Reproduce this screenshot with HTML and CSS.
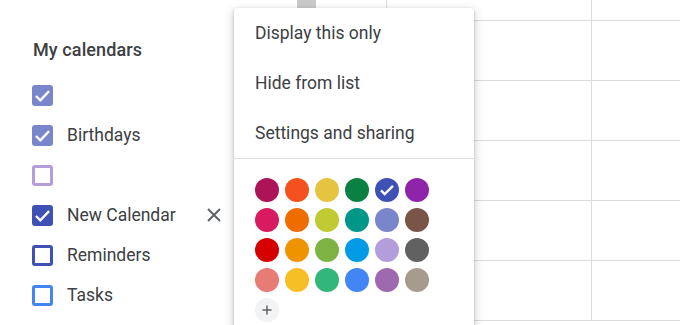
FILE: index.html
```html
<!DOCTYPE html>
<html>
<head>
<meta charset="utf-8">
<link rel="stylesheet" href="styles.css">
</head>
<body>
<div class="frame">
<div class="page">
  <aside class="sidebar">
    <h2 class="heading">My calendars</h2>
    <ul class="cal-list">
      <li class="cal"><span class="box checked c-lavender"><svg viewBox="0 0 24 24"><path d="M4.5 12.5l5 5L19.5 7" /></svg></span><span class="label"></span></li>
      <li class="cal"><span class="box checked c-lavender"><svg viewBox="0 0 24 24"><path d="M4.5 12.5l5 5L19.5 7" /></svg></span><span class="label">Birthdays</span></li>
      <li class="cal"><span class="box b-wisteria"></span><span class="label"></span></li>
      <li class="cal"><span class="box checked c-blueberry"><svg viewBox="0 0 24 24"><path d="M4.5 12.5l5 5L19.5 7" /></svg></span><span class="label">New Calendar</span>
        <svg class="close" viewBox="0 0 14 14"><path d="M1 1l12 12M13 1L1 13" /></svg></li>
      <li class="cal"><span class="box b-blueberry"></span><span class="label">Reminders</span></li>
      <li class="cal"><span class="box b-cobalt"></span><span class="label">Tasks</span></li>
    </ul>
  </aside>
  <main class="grid">
    <div class="cell top first"><span class="thumb"></span></div>
    <div class="cell top"></div>
    <div class="cell top last"></div>
    <div class="cell"></div><div class="cell"></div><div class="cell last"></div>
    <div class="cell"></div><div class="cell"></div><div class="cell last"></div>
    <div class="cell"></div><div class="cell"></div><div class="cell last"></div>
    <div class="cell"></div><div class="cell"></div><div class="cell last"></div>
    <div class="cell"></div><div class="cell"></div><div class="cell last"></div>
  </main>
</div>
<div class="menu">
  <div class="item">Display this only</div>
  <div class="item">Hide from list</div>
  <div class="item">Settings and sharing</div>
  <div class="divider"></div>
  <div class="palette">
    <span class="dot" style="background:#AD1457"></span>
    <span class="dot" style="background:#F4511E"></span>
    <span class="dot" style="background:#E4C441"></span>
    <span class="dot" style="background:#0B8043"></span>
    <span class="dot sel" style="background:#3F51B5"><svg viewBox="0 0 24 24"><path d="M5.5 12.5l4 4L18.5 7.5" /></svg></span>
    <span class="dot" style="background:#8E24AA"></span>
    <span class="dot" style="background:#D81B60"></span>
    <span class="dot" style="background:#EF6C00"></span>
    <span class="dot" style="background:#C0CA33"></span>
    <span class="dot" style="background:#009688"></span>
    <span class="dot" style="background:#7986CB"></span>
    <span class="dot" style="background:#795548"></span>
    <span class="dot" style="background:#D50000"></span>
    <span class="dot" style="background:#F09300"></span>
    <span class="dot" style="background:#7CB342"></span>
    <span class="dot" style="background:#039BE5"></span>
    <span class="dot" style="background:#B39DDB"></span>
    <span class="dot" style="background:#616161"></span>
    <span class="dot" style="background:#E67C73"></span>
    <span class="dot" style="background:#F6BF26"></span>
    <span class="dot" style="background:#33B679"></span>
    <span class="dot" style="background:#4285F4"></span>
    <span class="dot" style="background:#9E69AF"></span>
    <span class="dot" style="background:#A79B8E"></span>
    <span class="dot add"><svg viewBox="0 0 24 24"><path d="M12 6v12M6 12h12" /></svg></span>
  </div>
</div>
</div>
</body>
</html>
```
FILE: styles.css
```css
html, body {
  margin: 0;
  padding: 0;
  background: #fff;
  overflow: hidden;
}
body {
  font-family: Roboto, "Liberation Sans", Arial, sans-serif;
  color: #3c4043;
}
.frame {
  position: relative;
  width: 680px;
  height: 325px;
  overflow: hidden;
}
.page {
  display: flex;
  height: 325px;
}
.sidebar {
  width: 240px;
  flex: none;
}
.heading {
  margin: 38px 0 13px 33px;
  font-size: 18px;
  font-weight: 500;
  line-height: 24px;
  letter-spacing: 0.1px;
  color: #3c4043;
}
.cal-list {
  list-style: none;
  margin: 0;
  padding: 0;
}
.cal {
  display: flex;
  align-items: center;
  height: 40px;
  padding-left: 32px;
}
.box {
  box-sizing: border-box;
  width: 21px;
  height: 21px;
  border-radius: 3px;
  border: 3px solid transparent;
  margin-right: 14px;
  display: flex;
  align-items: center;
  justify-content: center;
  flex: none;
}
.box.checked {
  border: none;
}
.box svg {
  width: 21px;
  height: 21px;
  fill: none;
  stroke: #fff;
  stroke-width: 2.6;
}
.checked.c-lavender { background: #7986CB; }
.checked.c-blueberry { background: #3F51B5; }
.b-wisteria { border-color: #B39DDB; }
.b-blueberry { border-color: #3F51B5; }
.b-cobalt { border-color: #4285F4; }
.label {
  font-size: 17.5px;
  line-height: 24px;
  color: #3c4043;
}
.close {
  width: 14px;
  height: 14px;
  margin-left: auto;
  margin-right: 19px;
  fill: none;
  stroke: #5f6368;
  stroke-width: 2;
}
.grid {
  flex: 1;
  display: grid;
  grid-template-columns: 147px 205px 1fr;
  grid-template-rows: 21px repeat(5, 60px);
}
.cell {
  border-right: 1px solid #dadce0;
  border-bottom: 1px solid #dadce0;
}
.cell.last { border-right: none; }
.cell.first { position: relative; }
.thumb {
  position: absolute;
  left: 57px;
  top: 0;
  width: 19px;
  height: 8px;
  background: #c9c9c9;
}
.menu {
  position: absolute;
  left: 234px;
  top: 8px;
  width: 240px;
  height: 340px;
  background: #fff;
  border-radius: 4px;
  box-shadow: 0 4px 8px 3px rgba(60, 64, 67, 0.15), 0 1px 3px rgba(60, 64, 67, 0.3);
  box-sizing: border-box;
}
.item {
  height: 50px;
  line-height: 50px;
  padding-left: 21px;
  font-size: 17.5px;
  color: #3c4043;
}
.divider {
  height: 1px;
  background: #dadce0;
}
.palette {
  display: grid;
  grid-template-columns: repeat(6, 24px);
  grid-auto-rows: 24px;
  gap: 6px;
  padding: 19px 0 0 21px;
}
.dot {
  width: 24px;
  height: 24px;
  border-radius: 50%;
  display: flex;
  align-items: center;
  justify-content: center;
}
.dot svg {
  width: 22px;
  height: 22px;
  fill: none;
  stroke: #fff;
  stroke-width: 2.6;
}
.dot.add {
  background: #f1f3f4;
}
.dot.add svg {
  width: 18px;
  height: 18px;
  stroke: #5f6368;
  stroke-width: 2;
}
```
